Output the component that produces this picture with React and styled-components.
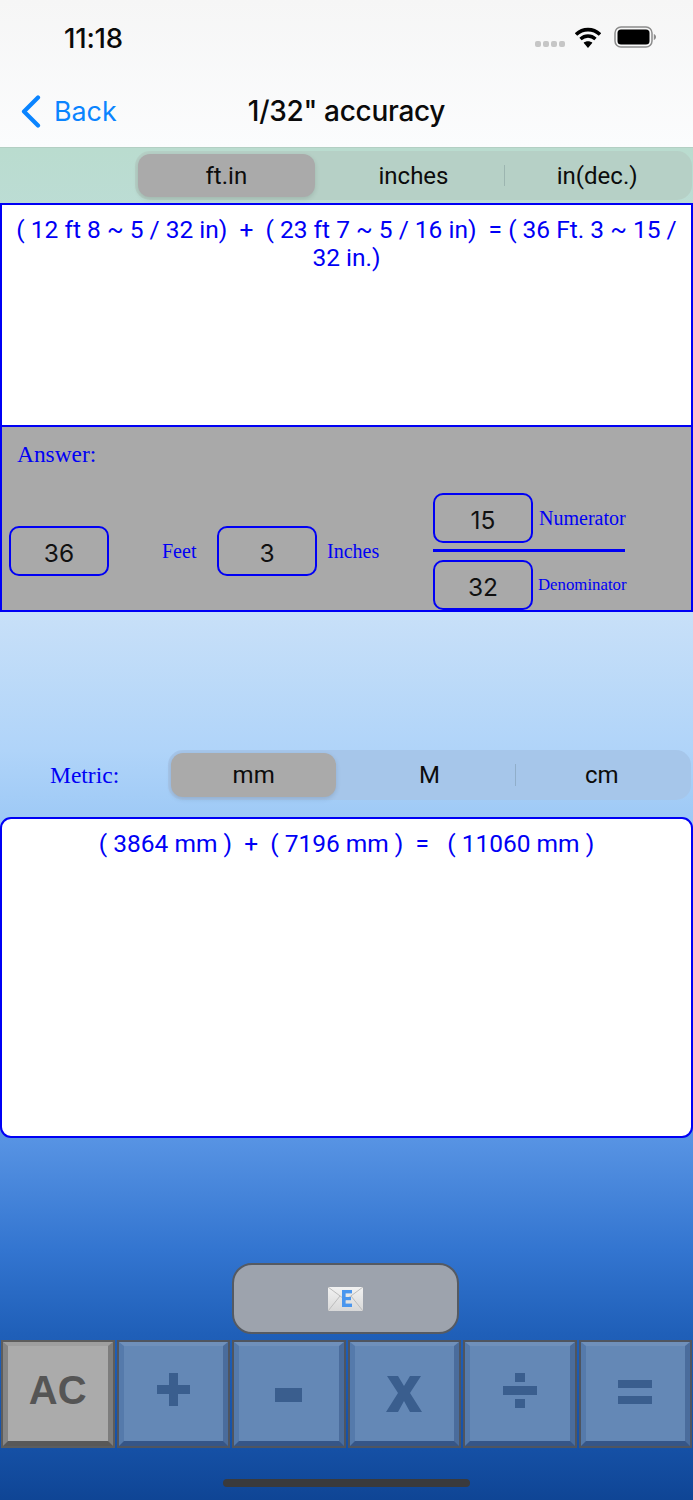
import React from "react";
import styled, { createGlobalStyle } from "styled-components";

const Global = createGlobalStyle`
  html, body { margin: 0; padding: 0; }
  body { width: 693px; height: 1500px; overflow: hidden; font-family: Inter, "Liberation Sans", sans-serif; }
  * { box-sizing: border-box; }
`;

const Page = styled.div`
  width: 693px;
  height: 1500px;
  display: flex;
  flex-direction: column;
  background: linear-gradient(180deg,
    #badccf 148px, #c8e0f8 612px, #b0d4f9 750px, #9fcaf6 815px,
    #5793e3 1140px, #3375d0 1250px, #1f5fb8 1335px, #1550a5 1450px, #0f4595 1500px);
`;

const Header = styled.header`
  height: 148px;
  flex: none;
  background: linear-gradient(180deg, #f6f6f6, #fbfcfd);
  border-bottom: 1px solid #b3cfc3;
  display: flex;
  flex-direction: column;
`;

const StatusBar = styled.div`
  height: 76px;
  padding: 0 37px 0 64px;
  display: flex;
  align-items: center;
`;

const Clock = styled.span`
  font-size: 27.5px;
  font-weight: 500;
  letter-spacing: -0.2px;
  color: #0a0a0a;
  margin-right: auto;
`;

const SignalDots = styled.span`
  display: flex;
  gap: 2px;
  margin: 12px 10px 0 0;
`;

const SignalDot = styled.i`
  width: 6px;
  height: 6px;
  border-radius: 2px;
  background: #c6c6c6;
`;

const NavBar = styled.nav`
  position: relative;
  height: 71px;
  display: flex;
  align-items: center;
  justify-content: center;
  padding-bottom: 2px;
`;

const BackLink = styled.span`
  position: absolute;
  left: 20px;
  top: 18px;
  display: flex;
  align-items: center;
  gap: 13px;
  color: #0a84ff;
  font-size: 26.8px;
  line-height: 34px;
`;

const Title = styled.h1`
  margin: 0;
  font-size: 28px;
  font-weight: 500;
  letter-spacing: -0.3px;
  color: #0a0a0a;
`;

const Segments = styled.div`
  display: grid;
  grid-template-columns: repeat(3, 1fr);
  align-items: stretch;
  padding: 3px;
  border-radius: 15px;
  background: ${(p) => p.$track};
`;

const Segment = styled.div`
  position: relative;
  display: flex;
  align-items: center;
  justify-content: center;
  margin-right: ${(p) => (p.$active ? "7px" : "0")};
  border-radius: 12px;
  font-family: Roboto, "Liberation Sans", sans-serif;
  font-size: 24px;
  color: #0c0c0c;
  background: ${(p) => (p.$active ? "#aaaaaa" : "transparent")};
  box-shadow: ${(p) => (p.$active ? "0 2px 5px rgba(0,0,0,.12)" : "none")};
  &::after {
    content: "";
    display: ${(p) => (p.$divider ? "block" : "none")};
    position: absolute;
    right: 0;
    top: 11px;
    bottom: 11px;
    width: 1px;
    background: rgba(90, 110, 120, 0.28);
  }
`;

const TopSegmentRow = styled.div`
  height: 55px;
  flex: none;
  padding: 3px 1px 1px 135px;
  & > ${Segments} { height: 49px; }
`;

const Panel = styled.div`
  background: #fff;
  border: 2px solid #0000f5;
  color: #0000f5;
  text-align: center;
  font-family: Roboto, "Liberation Sans", sans-serif;
  font-size: 24.5px;
  line-height: 28px;
`;

const ExpressionPanel = styled(Panel)`
  height: 224px;
  flex: none;
  padding: 11px 14px 0;
`;

const AnswerPanel = styled.section`
  height: 187px;
  flex: none;
  margin-top: -2px;
  background: #a9a9a9;
  border: 2px solid #0000f5;
  padding: 12px 0 0 7px;
  color: #0000f5;
  font-family: "Liberation Serif", serif;
  display: flex;
  flex-direction: column;
`;

const AnswerLabel = styled.div`
  font-size: 23.4px;
  line-height: 30px;
  padding-left: 8px;
`;

const AnswerRow = styled.div`
  margin-top: auto;
  display: flex;
  align-items: flex-end;
`;

const ValueBox = styled.div`
  width: 100px;
  height: 50px;
  flex: none;
  border: 2px solid #0000f5;
  border-radius: 10px;
  display: flex;
  align-items: center;
  justify-content: center;
  padding-top: 3px;
  color: #111;
  font-family: Inter, "Liberation Sans", sans-serif;
  font-size: 24.5px;
`;

const WholePart = styled.div`
  display: flex;
  align-items: center;
  margin: 0 0 34px;
`;

const UnitLabel = styled.span`
  font-size: 20px;
  width: ${(p) => p.$w}px;
  padding-left: ${(p) => p.$pad}px;
  flex: none;
`;

const Fraction = styled.div`
  display: flex;
  flex-direction: column;
  width: 192px;
`;

const FractionRow = styled.div`
  display: flex;
  align-items: center;
  white-space: nowrap;
`;

const FractionLabel = styled.span`
  font-size: ${(p) => p.$size}px;
  margin-left: ${(p) => p.$gap}px;
`;

const FractionBar = styled.div`
  height: 3px;
  background: #0000f5;
  margin: 6px 0 8px;
`;

const Spacer = styled.div`
  flex: none;
  height: ${(p) => p.$h}px;
`;

const MetricRow = styled.div`
  height: 50px;
  flex: none;
  display: flex;
  align-items: stretch;
  padding: 0 2px 0 0;
  & > ${Segments} { flex: 1; }
`;

const MetricLabel = styled.span`
  width: 168px;
  flex: none;
  padding-left: 50px;
  display: flex;
  align-items: center;
  color: #0000f5;
  font-family: "Liberation Serif", serif;
  font-size: 23.5px;
`;

const MetricPanel = styled(Panel)`
  height: 321px;
  flex: none;
  margin-top: 17px;
  padding-top: 11px;
  border-radius: 11px;
  white-space: pre;
`;

const MailRow = styled.div`
  display: flex;
  justify-content: center;
  padding: 125px 0 0;
  margin-left: -2px;
  flex: none;
`;

const MailButton = styled.button`
  width: 227px;
  height: 71px;
  border: 2px solid #555a62;
  border-radius: 20px;
  background: #9da3ad;
  display: flex;
  align-items: center;
  justify-content: center;
  padding: 0;
`;

const Keypad = styled.div`
  margin-top: 6px;
  height: 108px;
  flex: none;
  display: grid;
  grid-template-columns: repeat(6, 1fr);
  gap: 2px;
  padding: 0 1px;
`;

const Key = styled.div`
  border: 2px solid ${(p) => (p.$light ? "#5d5d5d" : "#4f5560")};
  background: ${(p) => (p.$light ? "#ababab" : "#6488b6")};
  display: flex;
  position: relative;
  &::before {
    content: "";
    position: absolute;
    inset: 0;
    border-style: solid;
    border-width: 4px 5px 5px 5px;
    border-color: ${(p) =>
      p.$light
        ? "#9f9f9f #7d7d7d #585858 #858585"
        : "#6f90bb #4a6c9c #355587 #557aab"};
  }
`;

const KeyGlyph = styled.span`
  margin: auto;
  color: ${(p) => (p.$light ? "#555555" : "#3a5e8e")};
  font-family: "Liberation Sans", sans-serif;
  font-weight: 700;
  font-size: 40px;
  line-height: 1;
  display: flex;
  position: relative;
  top: ${(p) => p.$lift}px;
`;

const HomeIndicator = styled.div`
  width: 247px;
  height: 8px;
  border-radius: 4px;
  background: #3a3a3c;
  margin: 31px 0 0 223px;
  flex: none;
`;

const Wifi = () => (
  <svg width="26" height="21" viewBox="0 0 26 21" style={{ marginTop: -2, marginRight: 0 }}>
    <path d="M1 7.5C7.8 1 18.2 1 25 7.5" fill="none" stroke="#000" strokeWidth="3.6" />
    <path d="M5.5 12C10 8 16 8 20.5 12" fill="none" stroke="#000" strokeWidth="3.4" />
    <path d="M13 21L8.6 15.8C11 13.8 15 13.8 17.4 15.8Z" fill="#000" />
  </svg>
);

const Battery = () => (
  <svg width="42" height="22" viewBox="0 0 42 22" style={{ marginLeft: 13, marginTop: -2 }}>
    <rect x="1" y="1" width="37" height="20" rx="6" fill="none" stroke="#8c8c8c" strokeWidth="1.5" />
    <rect x="3.5" y="3.5" width="32" height="15" rx="3.5" fill="#000" />
    <path d="M39.8 8v6c1.4-.5 2.2-1.6 2.2-3s-.8-2.5-2.2-3z" fill="#8c8c8c" />
  </svg>
);

const Chevron = () => (
  <svg width="21" height="33" viewBox="0 0 21 33">
    <path d="M18 2.5L4 16.5L18 30.5" fill="none" stroke="#0a84ff" strokeWidth="4.2" strokeLinecap="round" strokeLinejoin="round" />
  </svg>
);

const MailIcon = () => (
  <svg width="35" height="24" viewBox="0 0 35 24">
    <defs>
      <linearGradient id="envelope" x1="0" y1="0" x2="0" y2="1">
        <stop offset="0" stopColor="#f2f2f2" />
        <stop offset="1" stopColor="#d8d8d8" />
      </linearGradient>
    </defs>
    <rect width="35" height="24" fill="url(#envelope)" />
    <path d="M0 0L17.5 13L35 0M0 24L12 9M35 24L23 9" fill="none" stroke="#bcbcbc" strokeWidth="1" />
    <rect x="14" y="3" width="3.6" height="17" fill="#4a96ee" />
    <rect x="14" y="3" width="10" height="3.4" fill="#4a96ee" />
    <rect x="14" y="10" width="9" height="3.2" fill="#4a96ee" />
    <rect x="14" y="16.6" width="10" height="3.4" fill="#4a96ee" />
  </svg>
);

const Plus = () => (
  <svg width="33" height="33" viewBox="0 0 33 33"><path d="M12 0h9v12h12v9H21v12h-9V21H0v-9h12z" fill="#3a5e8e" /></svg>
);
const Minus = () => (
  <svg width="27" height="14" viewBox="0 0 27 14"><rect width="27" height="14" fill="#3a5e8e" /></svg>
);
const Times = () => (
  <svg width="36" height="36" viewBox="0 0 36 36"><path d="M1 0h11l6 10 6-10h11L24 17l12 19H24l-6-11-6 11H0l12-19z" fill="#3a5e8e" /></svg>
);
const Divide = () => (
  <svg width="34" height="35" viewBox="0 0 34 35">
    <rect x="12" width="10" height="9" fill="#3a5e8e" />
    <rect y="13" width="34" height="9" fill="#3a5e8e" />
    <rect x="12" y="26" width="10" height="9" fill="#3a5e8e" />
  </svg>
);
const Equals = () => (
  <svg width="34" height="24" viewBox="0 0 34 24">
    <rect width="34" height="8" fill="#3a5e8e" />
    <rect y="16" width="34" height="8" fill="#3a5e8e" />
  </svg>
);

const SegmentGroup = ({ items, track }) => (
  <Segments $track={track}>
    {items.map((t, i) => (
      <Segment key={t} $active={i === 0} $divider={i === 1}>{t}</Segment>
    ))}
  </Segments>
);

export default function App() {
  return (
    <Page>
      <Global />
      <Header>
        <StatusBar>
          <Clock>11:18</Clock>
          <SignalDots>
            <SignalDot /><SignalDot /><SignalDot /><SignalDot />
          </SignalDots>
          <Wifi />
          <Battery />
        </StatusBar>
        <NavBar>
          <BackLink><Chevron />Back</BackLink>
          <Title>1/32" accuracy</Title>
        </NavBar>
      </Header>

      <TopSegmentRow>
        <SegmentGroup items={["ft.in", "inches", "in(dec.)"]} track="#b6d0c6" />
      </TopSegmentRow>

      <ExpressionPanel>
        ( 12 ft 8 ~ 5 / 32 in)&nbsp; +&nbsp; ( 23 ft 7 ~ 5 / 16 in)&nbsp; = ( 36 Ft. 3 ~ 15 / 32 in.)
      </ExpressionPanel>

      <AnswerPanel>
        <AnswerLabel>Answer:</AnswerLabel>
        <AnswerRow>
          <WholePart>
            <ValueBox>36</ValueBox>
            <UnitLabel $w={108} $pad={53}>Feet</UnitLabel>
            <ValueBox>3</ValueBox>
            <UnitLabel $w={116} $pad={10}>Inches</UnitLabel>
          </WholePart>
          <Fraction>
            <FractionRow>
              <ValueBox>15</ValueBox>
              <FractionLabel $size={20} $gap={6}>Numerator</FractionLabel>
            </FractionRow>
            <FractionBar />
            <FractionRow>
              <ValueBox>32</ValueBox>
              <FractionLabel $size={16.8} $gap={5}>Denominator</FractionLabel>
            </FractionRow>
          </Fraction>
        </AnswerRow>
      </AnswerPanel>

      <Spacer $h={138} />

      <MetricRow>
        <MetricLabel>Metric:</MetricLabel>
        <SegmentGroup items={["mm", "M", "cm"]} track="#a6c6ea" />
      </MetricRow>

      <MetricPanel>{"( 3864 mm )  +  ( 7196 mm )  =   ( 11060 mm )"}</MetricPanel>

      <MailRow>
        <MailButton aria-label="Email"><MailIcon /></MailButton>
      </MailRow>

      <Keypad>
        <Key $light><KeyGlyph $light $lift={-4}>AC</KeyGlyph></Key>
        <Key><KeyGlyph $lift={-5}><Plus /></KeyGlyph></Key>
        <Key><KeyGlyph $lift={1}><Minus /></KeyGlyph></Key>
        <Key><KeyGlyph $lift={0}><Times /></KeyGlyph></Key>
        <Key><KeyGlyph $lift={-4}><Divide /></KeyGlyph></Key>
        <Key><KeyGlyph $lift={-2}><Equals /></KeyGlyph></Key>
      </Keypad>

      <HomeIndicator />
    </Page>
  );
}
